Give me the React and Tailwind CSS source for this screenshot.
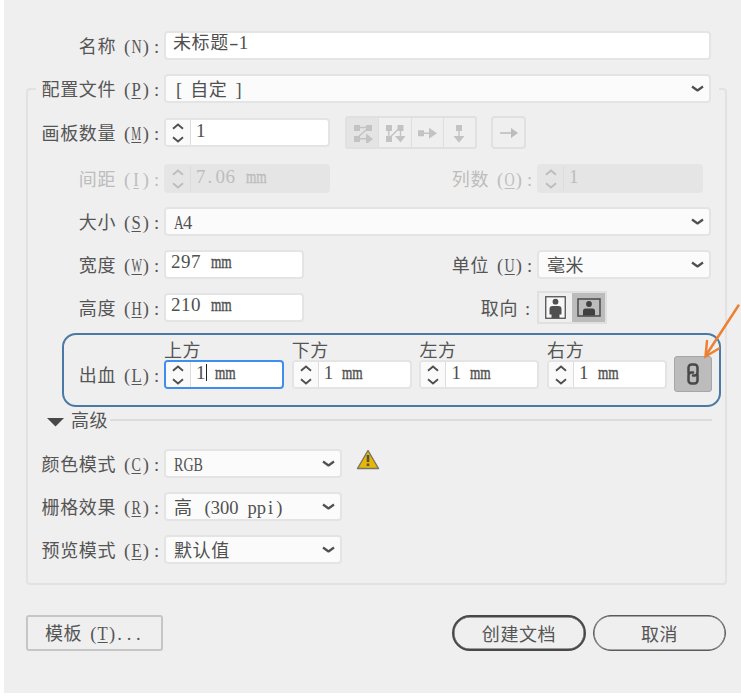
import React from "react";

const serif = "font-['Liberation_Serif','Noto_Sans_CJK_SC',serif]";
const cjk = "font-['Noto_Sans_CJK_SC',sans-serif] font-normal";

function Cjk({ children, className = "" }) {
  return (
    <span className={`${cjk} -mt-[4px] text-[18px] leading-[20px] tracking-[0.6px] whitespace-nowrap ${className}`}>
      {children}
    </span>
  );
}

const wide = { N: 1, M: 1, W: 1, H: 1, U: 1, R: 1, C: 1, O: 1 };

function Key({ k, plain }) {
  return (
    <span className={`${serif} flex w-[25px] shrink-0 items-center justify-between text-[18.5px] leading-[20px]`}>
      <span>(</span>
      <span className="flex w-[10px] justify-center">
        <span
          className={`${plain ? "" : "underline decoration-1 underline-offset-2"} ${
            wide[k] ? (k === "W" || k === "M" ? "scale-x-[0.6]" : "scale-x-[0.76]") : "scale-x-90"
          }`}
        >
          {k}
        </span>
      </span>
      <span>)</span>
    </span>
  );
}

function Label({ text, k, plain, disabled, className = "" }) {
  return (
    <div className={`flex shrink-0 items-center justify-end pt-[2px] ${disabled ? "text-[#bdbdbd]" : "text-[#555]"} ${className}`}>
      <Cjk>{text}</Cjk>
      {k && (
        <span className="ml-2 flex">
          <Key k={k} plain={plain} />
        </span>
      )}
      <span className={`${serif} shrink-0 text-center text-[18.5px] leading-[20px] ${k ? "w-[15px]" : "w-[19px]"}`}>:</span>
    </div>
  );
}

function Chevron({ className = "" }) {
  return (
    <svg width="13" height="8" viewBox="0 0 13 8" className={`shrink-0 ${className}`} fill="none" stroke="#505050" strokeWidth="2.2">
      <path d="M1 1.500L6.500 5.500L12 1.500" strokeLinejoin="round" />
    </svg>
  );
}

function Select({ children, className = "" }) {
  return (
    <div className={`flex h-[29px] shrink-0 items-center justify-between rounded-[4px] border-2 border-[#e4e4e4] bg-[#fbfbfb] pr-[5px] pl-[8px] text-[#505050] ${className}`}>
      <span className={`${serif} flex items-center pt-[3px] text-[18.5px] leading-[20px] whitespace-pre`}>{children}</span>
      <Chevron />
    </div>
  );
}

function Input({ children, className = "pl-[5px]" }) {
  return (
    <div className={`${serif} flex h-[29px] shrink-0 items-center rounded-[4px] border-2 border-[#e4e4e4] bg-white pb-[5px] text-[19px] leading-[20px] text-[#505050] ${className}`}>
      {children}
    </div>
  );
}

function Mm() {
  return <span className="inline-block w-[21px] origin-left scale-x-[0.74] text-[18px] [-webkit-text-stroke:0.4px]">mm</span>;
}

function Spinner({ children, disabled, focus, className = "" }) {
  const tone = disabled
    ? "border-[#e5e5e5] bg-[#e5e5e5] text-[#bdbdbd]"
    : focus
      ? "border-[#3f8eee] bg-white text-[#505050]"
      : "border-[#e4e4e4] bg-white text-[#505050]";
  return (
    <div className={`flex h-[29px] shrink-0 overflow-hidden rounded-[4px] border-2 ${tone} ${className}`}>
      <div className={`flex w-[25px] shrink-0 flex-col items-center justify-center gap-[6px] border-r border-[#dcdcdc] ${disabled ? "" : "bg-[#fafafa]"}`}>
        <svg width="12" height="7" viewBox="0 0 12 7" fill="none" stroke="currentColor" strokeWidth="1.900">
          <path d="M1 5.700 L6 1.500 L11 5.700" />
        </svg>
        <svg width="12" height="7" viewBox="0 0 12 7" fill="none" stroke="currentColor" strokeWidth="1.900">
          <path d="M1 1.300 L6 5.500 L11 1.300" />
        </svg>
      </div>
      <div className={`${serif} flex items-center pb-[4px] pl-[5px] text-[19px] leading-[20px] whitespace-pre`}>{children}</div>
    </div>
  );
}

function FlowButton({ active, children }) {
  return (
    <div className={`flex flex-1 items-center justify-center border-r border-[#dedede] last:border-r-0 ${active ? "bg-[#e4e4e4]" : ""}`}>
      <svg width="20" height="20" viewBox="0 0 20 20" fill="#c3c3c3" stroke="#c3c3c3" strokeWidth="1.4">
        {children}
      </svg>
    </div>
  );
}

function FlowButtons() {
  return (
    <div className="ml-[15px] flex h-[33px] w-[132px] shrink-0 overflow-hidden rounded-[3px] border-2 border-[#e0e0e0]">
      <FlowButton active>
        <path d="M1 2h6v6H1zM13 2h6v6h-6zM1 13h6v6H1zM13 10.500l7 5.500-7 5.500z" stroke="none" />
        <path d="M3 4.500H16L3 15.800H14" fill="none" />
      </FlowButton>
      <FlowButton>
        <path d="M1 2h6v6H1zM12.500 2h6v6h-6zM1 13h6v6H1zM10 13h10.500l-5 6.500z" stroke="none" />
        <path d="M3.800 4V15.500L15.500 4V14" fill="none" />
      </FlowButton>
      <FlowButton>
        <path d="M1 7.300h6v6H1zM12 4.800l8 5.500-8 5.500z" stroke="none" />
        <path d="M5 10.300H13" fill="none" />
      </FlowButton>
      <FlowButton>
        <path d="M7 2h6v6H7zM4.500 13h11L10 19.800z" stroke="none" />
        <path d="M10 6V14" fill="none" />
      </FlowButton>
    </div>
  );
}

function BleedField({ title, value, focus }) {
  return (
    <div className="flex w-[120px] shrink-0 flex-col text-[#555]">
      <Cjk className="h-[21px]">{title}</Cjk>
      <Spinner focus={focus}>
        <span>{value}</span>
        <span className={focus ? "h-[17px] w-[1.5px] bg-[#222]" : "w-[1px]"} />
        <span className="ml-[8px]">
          <Mm />
        </span>
      </Spinner>
    </div>
  );
}

export default function App() {
  return (
    <div className="relative h-[700px] w-[741px] overflow-hidden bg-white pl-1">
      <div className="flex h-[693px] flex-col bg-[#efefef] pt-[31px]">
        <div className="flex h-[29px] shrink-0">
          <Label text="名称" k="N" plain className="w-[160px]" />
          <Input className="w-[547px] pl-[7px]">
            <Cjk className="mt-[-5px]">未标题</Cjk>
            <span className="inline-block w-[10px] origin-left scale-x-150">-</span>
            <span>1</span>
          </Input>
        </div>

        <div className="mt-[28px] ml-[22px] h-[497px] w-[701px] shrink-0 rounded-[4px] border-2 border-[#e2e2e2]">
          <div className="-mt-[16px] mr-[6px] ml-[8px] flex h-[29px] bg-[#efefef]">
            <Label text="配置文件" k="P" className="w-[128px]" />
            <Select className="w-[547px]">
              <span className="pl-[2px]">[</span>
              <Cjk className="mx-[8px]">自定</Cjk>
              <span>]</span>
            </Select>
          </div>
          <div className="mt-[15px] flex h-[29px] items-center">
            <Label text="画板数量" k="M" className="w-[136px]" />
            <Spinner className="w-[166px]">1</Spinner>
            <FlowButtons />
            <div className="ml-[14px] flex h-[33px] w-[35px] shrink-0 items-center justify-center rounded-[4px] border-2 border-[#e0e0e0]">
              <svg width="20" height="12" viewBox="0 0 20 12" fill="#bcbcbc">
                <path d="M1 5.300h11V1l7 5-7 5V6.700H1z" />
              </svg>
            </div>
          </div>
          <div className="mt-[17px] flex h-[29px]">
            <Label text="间距" k="I" disabled className="w-[136px]" />
            <Spinner disabled className="w-[166px]">
              <span>7</span>
              <span className="w-[10px] pl-[2px]">.</span>
              <span className="mr-[10px] tracking-[0.500px]">06</span>
              <Mm />
            </Spinner>
            <Label text="列数" k="O" disabled className="w-[207px]" />
            <Spinner disabled className="w-[166px]">1</Spinner>
          </div>
          <div className="mt-[14px] flex h-[29px]">
            <Label text="大小" k="S" className="w-[136px]" />
            <Select className="w-[547px]">
              <span className="inline-block w-[9px] origin-left scale-x-[0.72]">A</span>
              <span>4</span>
            </Select>
          </div>
          <div className="mt-[14px] flex h-[29px]">
            <Label text="宽度" k="W" className="w-[136px]" />
            <Input className="w-[140px] pl-[5px]">
              <span className="mr-[10px] tracking-[0.500px]">297</span>
              <Mm />
            </Input>
            <Label text="单位" k="U" className="w-[233px]" />
            <Select className="w-[174px]">
              <Cjk>毫米</Cjk>
            </Select>
          </div>
          <div className="mt-[14px] flex h-[29px] items-center">
            <Label text="高度" k="H" className="w-[136px]" />
            <Input className="w-[140px] pl-[5px]">
              <span className="mr-[10px] tracking-[0.500px]">210</span>
              <Mm />
            </Input>
            <Label text="取向" className="w-[233px]" />
            <div className="flex h-[33px] w-[70px] shrink-0 border-2 border-[#e0e0e0]">
              <div className="flex flex-1 items-center justify-center">
                <svg width="21" height="23" viewBox="0 0 21 23" fill="#505050">
                  <rect x="0.75" y="0.75" width="19.500" height="21.500" fill="#f8f8f8" stroke="#505050" strokeWidth="1.300" />
                  <circle cx="10.500" cy="5.700" r="2.900" />
                  <path d="M7.500 10h6q3 0 3 3v5.500h-2V22h-8v-3.500h-2V13Q4.500 10 7.500 10z" />
                </svg>
              </div>
              <div className="flex flex-1 items-center justify-center bg-[#bcbcbc]">
                <svg width="24" height="19" viewBox="0 0 24 19" fill="#404040">
                  <rect x="1" y="1" width="22" height="17" fill="none" stroke="#505050" strokeWidth="1.600" />
                  <circle cx="12" cy="6" r="2.900" />
                  <path d="M6 17.500V13q0-2.500 2.500-2.500h7Q18 10.500 18 13v4.500z" />
                </svg>
              </div>
            </div>
          </div>

          <div className="mt-[11px] ml-[34px] flex h-[74px] w-[659px] items-end rounded-[14px] border-2 border-[#4a79a6] pb-[16px]">
            <Label text="出血" k="L" className="h-[29px] w-[100px]" />
            <div className="flex shrink-0 gap-[7.700px]">
              <BleedField title="上方" value="1" focus />
              <BleedField title="下方" value="1" />
              <BleedField title="左方" value="1" />
              <BleedField title="右方" value="1" />
            </div>
            <div className="-mb-[3px] ml-[7px] flex h-[36px] w-[38px] shrink-0 items-center justify-center rounded-[3px] border border-[#a6a6a6] bg-[#bcbcbc]">
              <svg width="14" height="24" viewBox="0 0 14 24" fill="none" stroke="#484848" strokeWidth="2.500" strokeLinecap="round">
                <path d="M2.500 11V5.500a3 3 0 0 1 3-3h3a3 3 0 0 1 3 3V10.500a3 3 0 0 1-3 3H7" />
                <path d="M11.500 13V18.500a3 3 0 0 1-3 3h-3a3 3 0 0 1-3-3V13.500a3 3 0 0 1 3-3H7" />
              </svg>
            </div>
          </div>

          <div className="mt-[2px] flex h-[22px] items-center pl-[19px] text-[#555]">
            <svg width="17" height="9" viewBox="0 0 17 9" fill="#484848" className="mt-[4px] shrink-0">
              <path d="M0 0H17L8.500 8.500z" />
            </svg>
            <Cjk className="mt-[-2px] ml-[7px]">高级</Cjk>
            <span className="ml-[2px] h-[2px] w-[602px] bg-[#dcdcdc]" />
          </div>

          <div className="mt-[18px] flex h-[29px]">
            <Label text="颜色模式" k="C" className="w-[136px]" />
            <Select className="w-[178px]">
              <span className="inline-block w-[29px] origin-left scale-x-[0.76]">RGB</span>
            </Select>
            <svg width="24" height="21" viewBox="0 0 24 21" className="ml-[14px] shrink-0">
              <path d="M12 1.500L22.500 19.500H1.500z" fill="#e8b800" stroke="#77736a" strokeWidth="1.400" strokeLinejoin="round" />
              <path d="M12 6v7M12 14.500v2.500" stroke="#505050" strokeWidth="2.600" />
            </svg>
          </div>
          <div className="mt-[14px] flex h-[29px]">
            <Label text="栅格效果" k="R" className="w-[136px]" />
            <Select className="w-[178px]">
              <Cjk>高</Cjk>
              <span className="ml-[12px]">(</span>
              <span className="mr-[9px]">300</span>
              <span>pp</span>
              <span className="mx-[2px]">i</span>
              <span className="ml-[1px]">)</span>
            </Select>
          </div>
          <div className="mt-[14px] flex h-[29px]">
            <Label text="预览模式" k="E" className="w-[136px]" />
            <Select className="w-[178px]">
              <Cjk>默认值</Cjk>
            </Select>
          </div>
        </div>

        <div className="mt-[30px] ml-[22px] flex h-[36px] w-[700px] shrink-0 text-[#555]">
          <button className="flex w-[137px] items-center rounded-[3px] border-2 border-[#c6c6c6] pt-[2px] pl-[17px]">
            <Cjk>模板</Cjk>
            <span className="ml-[8px] flex">
              <Key k="T" />
            </span>
            <span className={`${serif} ml-[2px] text-[18.500px] leading-[20px] tracking-[4.800px]`}>...</span>
          </button>
          <button className="ml-auto flex w-[134px] items-center justify-center rounded-full border-[2.500px] border-[#484848] pt-[3px] shadow-[inset_0_0_0_0.500px_#484848]">
            <Cjk>创建文档</Cjk>
          </button>
          <button className="ml-[7px] flex w-[133px] items-center justify-center rounded-full border-[1.500px] border-[#5a5a5a] pt-[3px] shadow-[inset_0_0_0_0.500px_#5a5a5a]">
            <Cjk>取消</Cjk>
          </button>
        </div>
      </div>

      <svg width="41" height="60" viewBox="0 0 41 60" fill="none" stroke="#ee8033" strokeWidth="2.500" strokeLinecap="round" className="absolute top-[300px] left-[700px]">
        <path d="M38.500 5.500L5.500 56M7 41L5.500 56.500L19 48.500" />
      </svg>
    </div>
  );
}
